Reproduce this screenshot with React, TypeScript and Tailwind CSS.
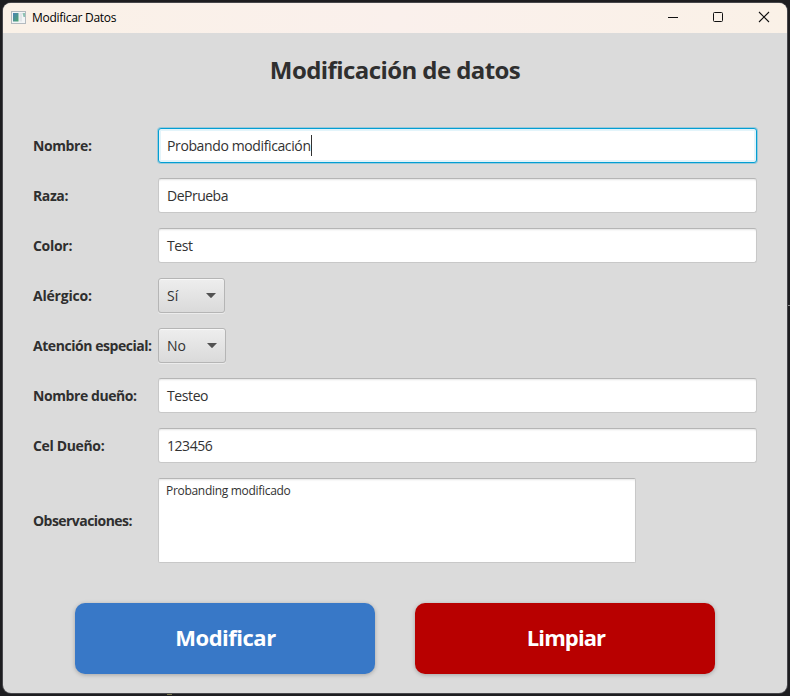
import type { ReactNode } from "react";

function Label({ text, tracking }: { text: string; tracking: string }) {
  return (
    <label className={`w-[125px] shrink-0 whitespace-nowrap text-sm font-bold text-[#2f2f2f] ${tracking}`}>
      {text}
    </label>
  );
}

function Row({ label, tracking, children }: { label: string; tracking: string; children: ReactNode }) {
  return (
    <div className="flex items-center">
      <Label text={label} tracking={tracking} />
      {children}
    </div>
  );
}

function Field({ value, tracking, focused }: { value: string; tracking: string; focused?: boolean }) {
  const look = focused
    ? "border-[#039ed3] shadow-[0_0_0_1px_rgba(3,158,211,0.3),inset_0_0_0_2px_#e3f4fa]"
    : "border-[#c8c8c8] border-t-[#b5b5b5] shadow-[inset_0_2px_2px_-1px_#e4e4e4]";
  return (
    <div className={`flex h-[35px] flex-1 items-center rounded-[3px] border bg-white pl-2 text-sm text-[#323232] ${look}`}>
      <span className={tracking}>{value}</span>
      {focused && <span className="h-[21px] w-px bg-[#323232]" />}
    </div>
  );
}

function Combo({ value, width, tracking }: { value: string; width: string; tracking: string }) {
  return (
    <button
      className={`flex h-[35px] items-center justify-between rounded-[3px] border border-[#b5b5b5] bg-linear-to-b from-[#eeeeee] to-[#dadada] pl-2 pr-[8px] text-sm text-[#323232] shadow-[0_1px_0_#ececec,inset_0_1px_0_#f8f8f8] ${width}`}
    >
      <span className={tracking}>{value}</span>
      <svg width="10" height="5" viewBox="0 0 11 5" preserveAspectRatio="none">
        <path d="M0 0H11L6.3 4.6Q5.5 5.3 4.7 4.6Z" fill="#525252" />
      </svg>
    </button>
  );
}

export default function App() {
  return (
    <div className="relative h-[696px] w-[790px] overflow-hidden bg-[#1d1d20] px-[3px] pt-[3px] font-['Open_Sans','Noto_Sans',sans-serif]">
      {/* slivers of the desktop behind the window */}
      <span className="absolute top-[305px] right-0 h-px w-[2px] bg-[#8a8a8a]" />
      <span className="absolute top-[694px] left-[167px] h-px w-[5px] bg-[#77744a]" />
      <div className="flex h-[690px] w-[784px] flex-col overflow-hidden rounded-[8px] bg-[#dbdbdb] shadow-[0_0_0_1px_#47474b]">
        <header className="flex h-[30px] shrink-0 items-center bg-linear-to-r from-[#faf1e7] via-[#faf0ec] to-[#faf1e7] pl-2">
          <svg width="15" height="13" viewBox="0 0 15 13" className="-mt-0.5">
            <defs>
              <linearGradient id="pane" x1="0" y1="0" x2="1" y2="1">
                <stop offset="0" stopColor="#4a83b5" />
                <stop offset="1" stopColor="#4fa56f" />
              </linearGradient>
            </defs>
            <rect x=".5" y=".5" width="14" height="12" fill="#f3f5f6" stroke="#b3babf" />
            <rect x="2" y="2" width="5.5" height="8.5" fill="url(#pane)" />
            <rect x="8.5" y="2" width="2.5" height="8.5" fill="#e2e6e9" />
            <path d="M11.5 2H14V6H12.5Z" fill="#8fc3b4" />
          </svg>
          <span className="ml-[6px] text-xs tracking-[-0.29px] text-black">Modificar Datos</span>
          <svg width="102" height="12" viewBox="0 0 102 12" fill="none" stroke="#111" className="mr-[17px] ml-auto -mt-0.5">
            <path d="M0 6.5H10" />
            <rect x="45.5" y="1.5" width="9" height="9" rx="1" />
            <path d="M91 1L101 11M101 1L91 11" strokeWidth="1.1" />
          </svg>
        </header>
        <main className="flex flex-col px-[30px]">
          <h1 className="mt-[20px] h-[33px] text-center text-2xl leading-[33px] font-bold tracking-[-0.58px] text-[#2f2f2f]">
            Modificación de datos
          </h1>
          <form className="mt-[42px] flex flex-col gap-[15px]">
            <Row label="Nombre:" tracking="tracking-[-0.4px]">
              <Field value="Probando modificación" tracking="tracking-[-0.38px]" focused />
            </Row>
            <Row label="Raza:" tracking="tracking-[-0.4px]">
              <Field value="DePrueba" tracking="tracking-[-0.5px]" />
            </Row>
            <Row label="Color:" tracking="tracking-[-0.3px]">
              <Field value="Test" tracking="tracking-[-0.4px]" />
            </Row>
            <Row label="Alérgico:" tracking="tracking-[-0.2px]">
              <Combo value="Sí" width="w-[67px]" tracking="tracking-normal" />
            </Row>
            <Row label="Atención especial:" tracking="tracking-[-0.45px]">
              <Combo value="No" width="w-[68px]" tracking="tracking-normal" />
            </Row>
            <Row label="Nombre dueño:" tracking="tracking-[-0.42px]">
              <Field value="Testeo" tracking="tracking-[-0.4px]" />
            </Row>
            <Row label="Cel Dueño:" tracking="tracking-[-0.35px]">
              <Field value="123456" tracking="tracking-[-0.45px]" />
            </Row>
            <Row label="Observaciones:" tracking="tracking-[-0.55px]">
              <div className="h-[85px] w-[478px] rounded-[2px] border border-[#c8c8c8] border-t-[#b5b5b5] bg-white pt-[4px] pl-[7px] text-xs leading-4 tracking-[-0.3px] text-[#323232] shadow-[inset_0_2px_2px_-1px_#e4e4e4]">
                Probanding modificado
              </div>
            </Row>
          </form>
          <div className="mt-10 flex justify-center gap-10 text-[22px] font-bold text-white">
            <button className="h-[71px] w-[300px] rounded-[10px] bg-[#3878c7] pb-0.5 pl-px tracking-[-0.5px] shadow-[0_1px_4px_rgba(0,0,0,0.25)]">
              Modificar
            </button>
            <button className="h-[71px] w-[300px] rounded-[10px] bg-[#b80000] pb-0.5 pl-0.5 tracking-[-0.9px] shadow-[0_1px_4px_rgba(0,0,0,0.25)]">
              Limpiar
            </button>
          </div>
        </main>
      </div>
    </div>
  );
}
